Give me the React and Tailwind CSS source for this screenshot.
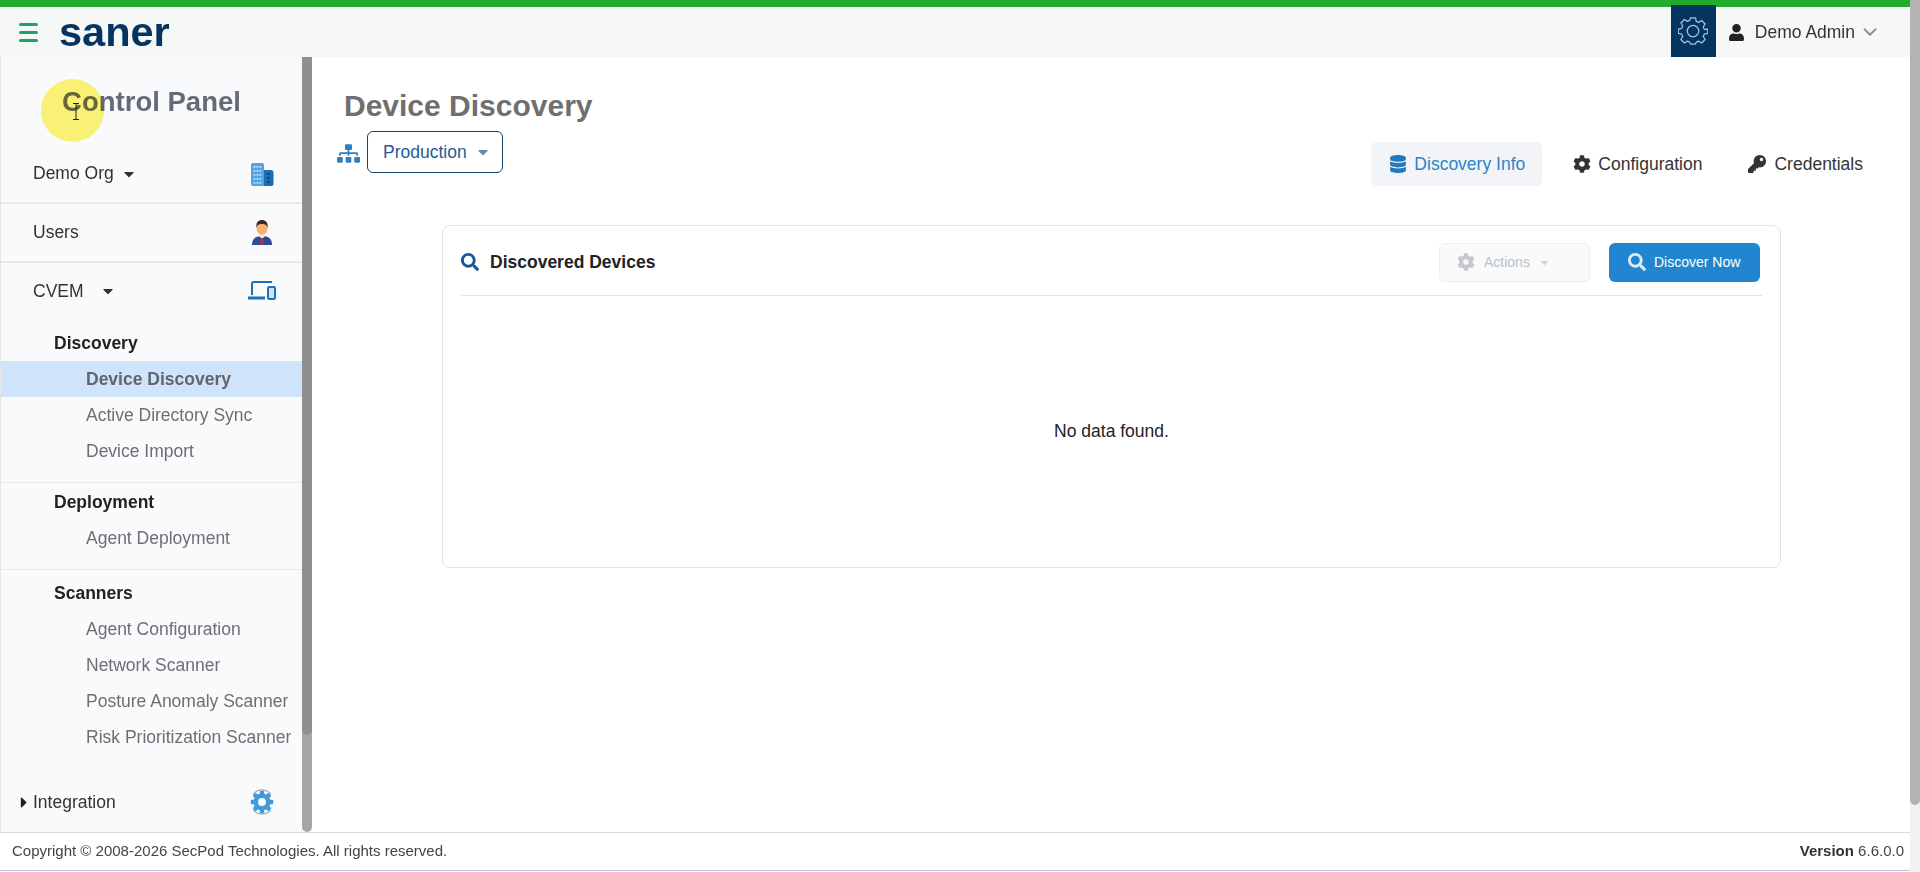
import { ChevronDown } from 'lucide-react';
import { FaCaretDown, FaCaretRight, FaCog, FaDatabase, FaKey, FaSearch, FaSitemap, FaUser } from 'react-icons/fa';

function BuildingIcon() {
  return (
    <svg width="24" height="24" viewBox="0 0 24 24">
      <path d="M1 3a2 2 0 0 1 2-2h9a2 2 0 0 1 2 2v21H3a2 2 0 0 1-2-2z" fill="#52a3e6" />
      <path d="M14 8h7a2.500 2.500 0 0 1 2.500 2.500V22a2 2 0 0 1-2 2H14z" fill="#1f6db5" />
      {[5, 9, 13, 17, 21].map((y) =>
        [3.5, 6.5, 9.500].map((x) => <rect key={`${x}-${y}`} x={x} y={y - 1} width="1.800" height="1.800" fill="#bfe0f8" />)
      )}
      {[12, 16, 20].map((y) => <rect key={y} x="17" y={y - 1} width="3" height="2" fill="#0e4a86" />)}
    </svg>
  );
}

function PersonIcon() {
  return (
    <svg width="22" height="27" viewBox="0 0 22 27">
      <path d="M1 26c0-6 3-9 10-9s10 3 10 9z" fill="#2f4a9c" />
      <path d="M8 17l3 3 3-3-1-3H9z" fill="#f2f2f2" />
      <path d="M10 19h2l.8 5-1.800 2-1.800-2z" fill="#b5382e" />
      <ellipse cx="11" cy="9" rx="5.500" ry="7" fill="#f5b26b" />
      <path d="M5.500 9C4.500 3 8 1 11 1s6.500 2 5.500 8c-.6-3-2-4-5.500-4S6 6 5.500 9z" fill="#3b2a20" />
    </svg>
  );
}

function DevicesIcon() {
  return (
    <svg width="28" height="20" viewBox="0 0 28 20" fill="none" stroke="#1f6fb8" strokeWidth="2">
      <path d="M4 14V2.500A1.500 1.500 0 0 1 5.500 1H24" />
      <path d="M0 17h17" strokeWidth="3" />
      <rect x="20" y="6" width="7" height="12" rx="1.200" fill="#cfe3f5" />
    </svg>
  );
}

function IntegrationIcon() {
  return (
    <svg width="24" height="28" viewBox="0 0 24 28">
      <path d="M3 6A12 12 0 0 1 21 6M3 22A12 12 0 0 0 21 22" fill="none" stroke="#6b7b8c" strokeWidth="0.800" />
      <g fill="#429bd8">
        <circle cx="12" cy="14" r="8.500" />
        {[0, 45, 90, 135, 180, 225, 270, 315].map((a) => (
          <rect key={a} x="9.800" y="2.800" width="4.400" height="4" transform={`rotate(${a} 12 14)`} />
        ))}
      </g>
      <circle cx="12" cy="14" r="4" fill="#f9fafc" />
    </svg>
  );
}

function OutlineGear() {
  return (
    <svg width="30" height="30" viewBox="0 0 24 24" fill="none" stroke="#a9c2d8" strokeWidth="1" strokeLinejoin="round">
      <path d="M10 2h4l.6 2.800 1.900.8 2.400-1.500 2.800 2.800-1.500 2.400.8 1.900L23.800 11v3.400l-2.800.6-.8 1.900 1.500 2.400-2.800 2.800-2.400-1.500-1.900.8-.6 1.600h-4l-.6-1.600-1.900-.8-2.400 1.500-2.800-2.800 1.500-2.400-.8-1.900L.2 14.400V11L3 10.400l.8-1.900-1.500-2.400 2.800-2.800 2.400 1.500 1.900-.8z" transform="translate(0 -.5)" />
      <circle cx="12" cy="12" r="4.600" />
    </svg>
  );
}

function MenuRow({ label, icon, caret, divider }) {
  return (
    <div className={`h-[59px] pl-[32px] pr-[26px] flex items-center justify-between text-[17.5px] text-[#333] ${divider ? 'border-b-2 border-[#e6e8eb]' : ''}`}>
      <span className="flex items-center">
        {label}
        {caret}
      </span>
      <span className="w-[28px] flex justify-center">{icon}</span>
    </div>
  );
}

function SubHead({ children }) {
  return <div className="h-[36px] pl-[53px] flex items-center text-[17.5px] font-bold text-[#222]">{children}</div>;
}

function SubItem({ children, active }) {
  return (
    <div className={`h-[36px] pl-[85px] flex items-center text-[17.5px] whitespace-nowrap ${active ? 'bg-[#cfe3fb] font-bold text-[#62656b]' : 'text-[#6d6f73]'}`}>
      {children}
    </div>
  );
}

function Sidebar() {
  return (
    <div className="w-[302px] shrink-0 bg-[#f9fafc] border-l border-[#e3e5e8] flex flex-col relative">
      <div className="h-[88px] pt-[27px] text-center text-[27.5px] leading-[36px] font-bold text-[#656b76]">Control Panel</div>
      <MenuRow label="Demo Org" divider icon={<BuildingIcon />} caret={<FaCaretDown className="ml-[7px] text-[16px] text-[#333]" />} />
      <MenuRow label="Users" divider icon={<PersonIcon />} />
      <div className="h-[56px] pl-[32px] pr-[26px] flex items-center justify-between text-[17.5px] text-[#333]">
        <span className="flex items-center">CVEM<FaCaretDown className="ml-[16px] text-[16px] text-[#333]" /></span>
        <DevicesIcon />
      </div>
      <div className="pt-[6px]">
        <SubHead>Discovery</SubHead>
        <SubItem active>Device Discovery</SubItem>
        <SubItem>Active Directory Sync</SubItem>
        <SubItem>Device Import</SubItem>
      </div>
      <div className="mt-[13px] border-t border-[#e6e8eb] pt-px">
        <SubHead>Deployment</SubHead>
        <SubItem>Agent Deployment</SubItem>
      </div>
      <div className="mt-[13px] border-t border-[#e6e8eb] pt-[5px]">
        <SubHead>Scanners</SubHead>
        <SubItem>Agent Configuration</SubItem>
        <SubItem>Network Scanner</SubItem>
        <SubItem>Posture Anomaly Scanner</SubItem>
        <SubItem>Risk Prioritization Scanner</SubItem>
      </div>
      <div className="mt-[29px] h-[36px] pl-[14px] pr-[26px] flex items-center justify-between text-[17.5px] text-[#333]">
        <span className="flex items-center"><FaCaretRight className="w-[18px] text-[17px] text-[#222]" />Integration</span>
        <span className="w-[28px] flex justify-center"><IntegrationIcon /></span>
      </div>
      {/* recorded cursor highlight */}
      <div className="absolute left-[40px] top-[22px] w-[63px] h-[63px] rounded-full bg-[#fff677] mix-blend-multiply" />
      <svg className="absolute left-[70px] top-[46px]" width="10" height="17" viewBox="0 0 10 17" fill="none" stroke="#222" strokeWidth="1">
        <path d="M2 .5h6M2 16.500h6M5 .5v16" />
      </svg>
    </div>
  );
}

function MainContent() {
  return (
    <div className="flex-1 bg-white relative flex flex-col pl-[25px]">
      <h1 className="pl-[7px] pt-[29px] text-[30px] leading-[40px] font-bold text-[#6f6f6f]">Device Discovery</h1>
      <div className="flex justify-between">
        <div className="flex items-start mt-[5px]">
          <FaSitemap className="mt-[11px] text-[23px] text-[#2f7fc4]" />
          <button className="ml-[7px] w-[136px] h-[42px] pl-[15px] flex items-center border border-[#16456f] rounded-[6px] text-[17.5px] text-[#1d5c96]">
            Production
            <FaCaretDown className="ml-[8px] text-[16px] text-[#5a8db8]" />
          </button>
        </div>
        <div className="flex items-center mt-[16px] h-[44px] pr-[47px] text-[17.5px] text-[#333]">
          <div className="h-[44px] w-[171px] rounded-[6px] bg-[#f2f4f7] flex items-center pl-[18px] text-[#2b85c6]">
            <FaDatabase className="text-[18px] text-[#2279bd] mr-[7px]" />
            Discovery Info
          </div>
          <div className="flex items-center ml-[31px]"><FaCog className="text-[18px] mr-[7px]" />Configuration</div>
          <div className="flex items-center ml-[46px]"><FaKey className="text-[18px] mr-[8px]" />Credentials</div>
        </div>
      </div>
      <div className="ml-[105px] mt-[39px] w-[1339px] h-[343px] border border-[#e2e4ea] rounded-[8px] px-[18px] flex flex-col">
        <div className="h-[70px] shrink-0 pt-[3px] flex items-center justify-between border-b border-[#e2e4ea]">
          <div className="flex items-center text-[17.5px] font-bold text-[#222]">
            <FaSearch className="text-[18px] text-[#15589a] mr-[11px]" />
            Discovered Devices
          </div>
          <div className="flex items-center pr-[2px]">
            <button className="w-[151px] h-[39px] pl-[17px] flex items-center border border-[#eceef2] rounded-[6px] bg-[#f9fafc] text-[14px] text-[#bdbfc3]">
              <FaCog className="text-[18px] mr-[9px] text-[#c6c8cb]" />
              Actions
              <FaCaretDown className="ml-[8px] text-[13px] text-[#d3d5d8]" />
            </button>
            <button className="ml-[19px] w-[151px] h-[39px] pl-[19px] flex items-center rounded-[6px] bg-[#2285d0] text-[14px] text-white">
              <FaSearch className="text-[18px] mr-[8px] text-[#d9ecf9]" />
              Discover Now
            </button>
          </div>
        </div>
        <div className="flex-1 flex items-center justify-center text-[17.5px] text-[#222]">No data found.</div>
      </div>
    </div>
  );
}

export default function App() {
  return (
    <div className="w-[1920px] h-[872px] overflow-hidden flex bg-white font-['Liberation_Sans',Arial,sans-serif]">
      <div className="w-[1910px] flex flex-col">
        <div className="h-[7px] bg-[#22ab2d] shrink-0" />
        <header className="h-[50px] shrink-0 bg-[#f6f7f7] flex items-center">
          <div className="ml-[19px] w-[19px] flex flex-col gap-[5px]">
            <span className="h-[3px] rounded-full bg-[#1fa363]" />
            <span className="h-[3px] rounded-full bg-[#1fa363]" />
            <span className="h-[3px] rounded-full bg-[#1fa363]" />
          </div>
          <span className="ml-[21px] text-[41.5px] leading-[40px] font-bold text-[#03355f] mt-[-1px]">saner</span>
          <div className="ml-auto w-[45px] h-[52px] -mt-px bg-[#03355f] flex items-center justify-center -translate-y-px"><OutlineGear /></div>
          <FaUser className="ml-[12px] text-[17px] text-[#222]" />
          <span className="ml-[10px] text-[17.5px] text-[#333]">Demo Admin</span>
          <ChevronDown className="ml-[4px] text-[#8d8f92]" size={22} strokeWidth={2} />
          <span className="w-[29px]" />
        </header>
        <div className="flex-1 flex min-h-0">
          <Sidebar />
          <div className="w-[10px] shrink-0 bg-[#a6a6a6] rounded-b-full">
            <div className="h-[678px] bg-[#8f8f8f] rounded-b-full" />
          </div>
          <MainContent />
        </div>
        <footer className="h-[39px] mb-px shrink-0 border-t border-[#d9d9d9] border-b border-b-[#b8c7d9] bg-white flex items-center justify-between pl-[12px] pr-[6px] text-[15px] text-[#444]">
          <span>Copyright © 2008-2026 SecPod Technologies. All rights reserved.</span>
          <span><b className="text-[#333]">Version</b> 6.6.0.0</span>
        </footer>
      </div>
      <div className="w-[10px] bg-[#f1f1f1]">
        <div className="h-[805px] bg-[#b3b3b3] rounded-b-full" />
      </div>
    </div>
  );
}
